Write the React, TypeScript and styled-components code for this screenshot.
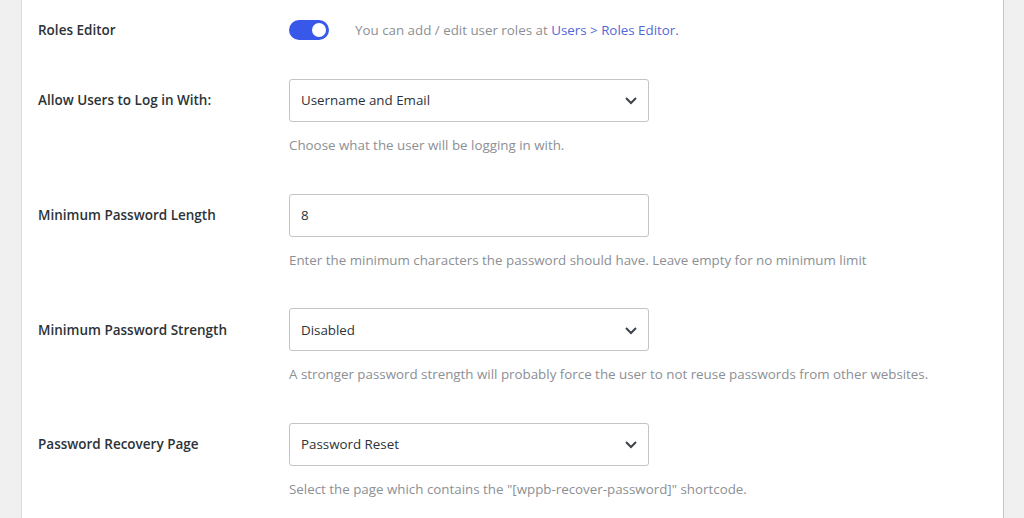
import React from 'react'
import styled, { createGlobalStyle } from 'styled-components'

const GlobalStyle = createGlobalStyle`
  html, body {
    margin: 0;
    padding: 0;
    background: #f0f0f1;
    font-family: 'Open Sans', 'Noto Sans', sans-serif;
    overflow: hidden;
  }
`

const Page = styled.div`
  display: flex;
  height: 518px;
  background: #f0f0f1;
`

const Panel = styled.div`
  margin-left: 21px;
  width: 983px;
  height: 100%;
  background: #fff;
  border-left: 1px solid #dcdcde;
  border-right: 1px solid #c3c4c7;
  padding: 20.3px 16px 0;
  box-sizing: border-box;
  display: flex;
  flex-direction: column;
  gap: 38.67px;
`

const Row = styled.div`
  display: grid;
  grid-template-columns: 251px 1fr;
  align-items: start;
`

const Label = styled.div<{ $h: number }>`
  height: ${({ $h }) => $h}px;
  display: flex;
  align-items: center;
  font-size: 13.5px;
  font-weight: 600;
  color: #2c3338;
`

const Field = styled.div`
  display: flex;
  flex-direction: column;
`

const Inline = styled.div`
  display: flex;
  align-items: center;
  gap: 26px;
  height: 20px;
`

const Toggle = styled.span`
  position: relative;
  width: 40px;
  height: 20px;
  border-radius: 10px;
  background: #3858e9;
  flex-shrink: 0;
  &::after {
    content: '';
    position: absolute;
    right: 3px;
    top: 3px;
    width: 14px;
    height: 14px;
    border-radius: 50%;
    background: #fff;
  }
`

const Note = styled.span`
  font-size: 13.35px;
  color: #8c8f94;
`

const Link = styled.a`
  color: #5468d8;
  text-decoration: none;
`

const Box = styled.div`
  width: 360px;
  height: 43px;
  box-sizing: border-box;
  border: 1px solid #c3c4c7;
  border-radius: 3px;
  display: flex;
  align-items: center;
  justify-content: space-between;
  padding: 0 10px 0 11px;
  font-size: 13.35px;
  color: #2c3338;
`

const Help = styled.p`
  margin: 13px 0 0;
  font-size: 13.35px;
  line-height: 20px;
  color: #8c8f94;
`

const Chevron = () => (
  <svg width="14" height="14" viewBox="0 0 14 14">
    <path d="M2 5l5 5 5-5" fill="none" stroke="#3c434a" strokeWidth="2" />
  </svg>
)

const fields = [
  {
    label: 'Allow Users to Log in With:',
    value: 'Username and Email',
    select: true,
    help: 'Choose what the user will be logging in with.',
  },
  {
    label: 'Minimum Password Length',
    value: '8',
    select: false,
    help: 'Enter the minimum characters the password should have. Leave empty for no minimum limit',
  },
  {
    label: 'Minimum Password Strength',
    value: 'Disabled',
    select: true,
    help: 'A stronger password strength will probably force the user to not reuse passwords from other websites.',
  },
  {
    label: 'Password Recovery Page',
    value: 'Password Reset',
    select: true,
    help: 'Select the page which contains the "[wppb-recover-password]" shortcode.',
  },
]

export default function App() {
  return (
    <Page>
      <GlobalStyle />
      <Panel>
        <Row>
          <Label $h={20}>Roles Editor</Label>
          <Inline>
            <Toggle />
            <Note>
              You can add / edit user roles at <Link href="#">Users &gt; Roles Editor.</Link>
            </Note>
          </Inline>
        </Row>
        {fields.map((f) => (
          <Row key={f.label}>
            <Label $h={43}>{f.label}</Label>
            <Field>
              <Box>
                <span>{f.value}</span>
                {f.select && <Chevron />}
              </Box>
              <Help>{f.help}</Help>
            </Field>
          </Row>
        ))}
      </Panel>
    </Page>
  )
}
